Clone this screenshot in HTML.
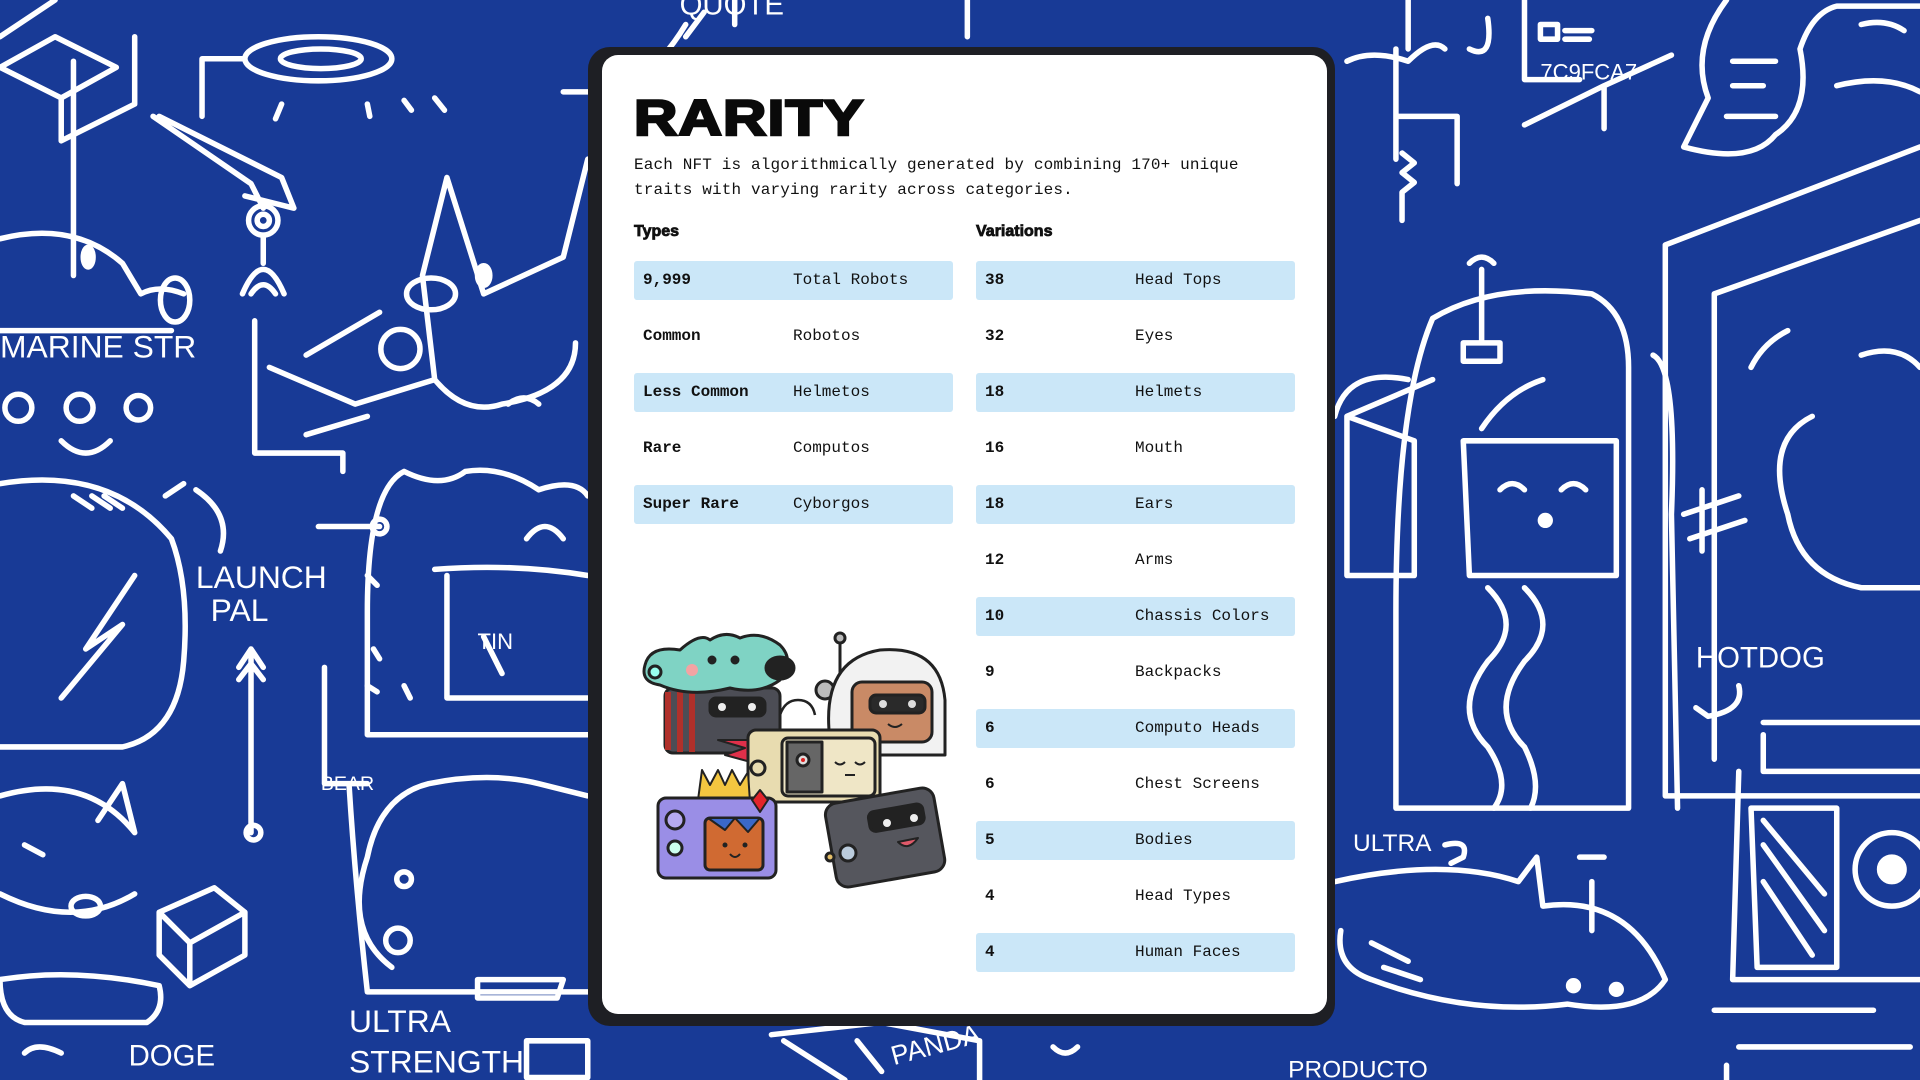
<!DOCTYPE html>
<html><head><meta charset="utf-8"><style>
*{margin:0;padding:0;box-sizing:border-box}
body{width:1920px;height:1080px;overflow:hidden;background:#183a96;position:relative;font-family:"Liberation Mono",monospace}
#bg{position:absolute;left:0;top:0;width:1920px;height:1080px}
.shadow{position:absolute;left:588px;top:47px;width:747px;height:979px;background:#1e1f24;border-radius:22px}
.card{position:absolute;left:602px;top:55px;width:725px;height:959px;background:#fff;border-radius:16px}
h1{position:absolute;left:32px;top:34px;font-family:"Liberation Sans",sans-serif;font-weight:900;font-size:50px;letter-spacing:1px;transform:scaleX(1.2);transform-origin:left;color:#0a0a0a;-webkit-text-stroke:2.5px #0a0a0a}
.desc{position:absolute;left:32px;top:98px;font-size:16px;line-height:24.5px;color:#111;letter-spacing:.15px}
.hd{position:absolute;top:168px;font-family:"Liberation Sans",sans-serif;font-weight:900;font-size:16px;color:#111;-webkit-text-stroke:.8px #111}
.row{position:absolute;height:39px;width:319px;border-radius:3px;font-size:16px;color:#111}
.row.b{background:#cbe7f8}
.row span{position:absolute;top:10px}
.row .a{left:9px;font-weight:bold}
.row .v{left:159px}
</style></head><body>
<svg id="bg" viewBox="0 0 1568 882" preserveAspectRatio="none" fill="none" stroke="#fff" stroke-width="4.5" stroke-linecap="round" stroke-linejoin="round">
<path d="M0 30 L45 0 M0 55 L45 30 L95 55 L50 80 Z M50 80 V115 L110 85 V30"/>
<ellipse cx="260" cy="48" rx="60" ry="18"/><ellipse cx="262" cy="48" rx="33" ry="8"/>
<path d="M198 48 H165 V95 M460 75 H490 Q530 70 560 20 M230 85l-5 12 M300 85l2 10 M330 82l6 8 M355 80l8 10"/>
<path d="M125 95 L205 150 L215 170 M130 95 L230 145 L240 170 L200 160"/>
<circle cx="215" cy="180" r="12"/><circle cx="215" cy="180" r="5"/>
<path d="M215 192 V215 M198 240 Q215 200 232 240 M205 240 Q215 225 225 240"/>
<path d="M208 262 V370 H280 V385"/>
<path d="M0 195 Q60 180 100 215 L115 240 Q130 232 150 240 M0 270 H140 M60 50 V225"/>
<ellipse cx="143" cy="245" rx="12" ry="18"/><ellipse cx="72" cy="210" rx="4" ry="8" fill="#fff"/>
<text x="0" y="292" font-family="Liberation Sans" font-size="26" fill="#fff" stroke="none">MARINE STR</text>
<circle cx="15" cy="333" r="11"/><circle cx="65" cy="333" r="11"/><circle cx="113" cy="333" r="10"/>
<path d="M50 360 Q70 380 90 360"/>
<path d="M365 145 L345 225 L355 310 Q380 340 410 330 Q470 320 470 280 M365 145 L395 240 L460 210 L480 130 M355 310 L290 330 L220 300 M300 340 L250 355 M310 255 L250 290"/>
<ellipse cx="352" cy="240" rx="20" ry="13"/><ellipse cx="327" cy="285" rx="16" ry="16"/>
<ellipse cx="395" cy="225" rx="5" ry="8" fill="#fff"/><path d="M415 330 Q428 320 440 330"/>
<path d="M0 395 Q90 380 140 440 Q155 480 150 540 Q145 600 100 610 H0 M110 470 L70 530 L100 510 L50 570 M60 405l15 10 M75 405l15 10 M85 405l15 10"/>
<path d="M150 395 L135 405 M160 400 Q190 420 180 450"/>
<text x="160" y="480" font-family="Liberation Sans" font-size="26" fill="#fff" stroke="none">LAUNCH</text>
<text x="172" y="507" font-family="Liberation Sans" font-size="26" fill="#fff" stroke="none">PAL</text>
<path d="M205 530 V680 M195 545 L205 530 L215 545 M195 555 L205 542 L215 555"/>
<circle cx="207" cy="680" r="6"/>
<path d="M265 545 V640 H300 M285 640 Q290 720 300 810 H480"/>
<path d="M300 500 Q300 400 330 385 Q360 400 380 385 Q410 380 440 400 Q470 390 480 405 M300 500 V600 H480 M355 465 Q420 460 480 470 M365 470 V570 H480"/>
<circle cx="310" cy="430" r="6"/><path d="M260 430 H310 M300 470l8 8 M305 530l5 8 M300 560l8 5 M330 560l5 10 M395 520l15 30 M430 440 Q445 420 460 440"/>
<text x="390" y="530" font-family="Liberation Sans" font-size="18" fill="#fff" stroke="none">TIN</text>
<path d="M0 650 Q70 630 110 680 L100 640 L80 670 M0 730 Q60 760 110 730 M130 745 L175 725 L200 745 L155 770 Z M155 770 V805 L200 780 V745 M130 745 V780 L155 805"/>
<ellipse cx="70" cy="740" rx="12" ry="8"/><path d="M20 690l15 8"/>
<path d="M0 800 Q60 790 130 805 Q135 825 120 835 H20 Q0 830 0 800"/>
<path d="M20 860 Q30 850 50 860"/>
<text x="105" y="870" font-family="Liberation Sans" font-size="24" fill="#fff" stroke="none">DOGE</text>
<text x="285" y="843" font-family="Liberation Sans" font-size="26" fill="#fff" stroke="none">ULTRA</text>
<text x="285" y="876" font-family="Liberation Sans" font-size="26" fill="#fff" stroke="none">STRENGTH</text>
<text x="262" y="645" font-family="Liberation Sans" font-size="16" fill="#fff" stroke="none">BEAR</text>
<path d="M300 700 Q310 650 350 640 Q400 630 440 640 L480 650 M300 700 Q280 760 320 790 M390 800 H460 L455 815 H390 Z M430 850 H480 V880 H430 Z"/>
<circle cx="325" cy="768" r="10"/><circle cx="330" cy="718" r="6"/>
<path d="M560 30 L575 10 M600 0 V20 M790 0 V30 M630 845 L720 835 L800 850 V882 M640 850 L690 882 M700 850 L720 875"/>
<text x="730" y="870" font-family="Liberation Sans" font-size="22" fill="#fff" stroke="none" transform="rotate(-15 730 870)">PANDA</text>
<text x="555" y="12" font-family="Liberation Sans" font-size="24" fill="#fff" stroke="none">QUOTE</text>
<path d="M860 855 Q870 865 880 855"/>
<path d="M1100 50 Q1120 40 1150 50 Q1170 30 1180 40 M1200 40 Q1220 50 1215 15 M1150 0 V40"/>
<path d="M1140 40 V95 H1190 V150 M1140 95 V130 M1145 125l10 8 -10 8 10 8 -10 8 V180"/>
<path d="M1245 0 V65 L1290 65 M1245 102 L1310 70 L1365 45 M1310 70 V105"/>
<rect x="1258" y="20" width="14" height="12"/><path d="M1278 25 H1300 M1278 32 H1298"/>
<text x="1258" y="65" font-family="Liberation Sans" font-size="18" fill="#fff" stroke="none">7C9FCA7</text>
<path d="M1410 0 Q1380 40 1395 80 L1375 120 Q1430 135 1450 110 Q1480 90 1470 40 Q1480 10 1500 5 H1568 M1415 70 H1440 M1410 95 H1450 M1415 50 H1450 M1500 70 Q1540 60 1568 75 M1520 20 Q1540 15 1555 25"/>
<path d="M1360 200 V650 H1568 M1360 200 L1568 120 M1400 240 L1568 180 M1400 240 V620 M1480 340 Q1440 360 1460 420 Q1470 470 1520 480 H1568 M1520 290 Q1550 280 1568 300 M1430 300 Q1440 280 1460 270"/>
<path d="M1100 340 L1170 310 M1100 340 V470 H1155 M1100 340 L1155 360 V470 M1150 310 Q1100 300 1090 340"/>
<path d="M1170 260 Q1220 230 1300 240 Q1330 255 1330 300 V660 H1140 V500 Q1140 330 1170 260"/>
<path d="M1210 220 V280 M1195 280 H1225 V295 H1195 Z M1200 215 Q1210 205 1220 215"/>
<path d="M1195 360 H1320 V470 H1200 Z M1225 400 Q1235 390 1245 400 M1275 400 Q1285 390 1295 400 M1210 350 Q1230 320 1260 310"/>
<circle cx="1262" cy="425" r="4" fill="#fff"/>
<path d="M1215 480 Q1245 510 1215 540 Q1185 580 1215 610 Q1235 640 1220 660 M1245 480 Q1275 510 1245 540 Q1215 580 1245 610 Q1260 640 1250 660"/>
<path d="M1350 290 Q1370 300 1365 420 L1370 660 M1375 420 L1420 405 M1380 440 L1425 425 M1390 400 V450"/>
<text x="1385" y="545" font-family="Liberation Sans" font-size="24" fill="#fff" stroke="none">HOTDOG</text>
<path d="M1420 560 Q1425 580 1395 585 L1385 578"/>
<path d="M1440 590 H1568 M1440 600 V630 H1568 M1420 630 L1415 800 H1568 M1430 660 H1500 V790 H1435 Z M1440 670 L1490 730 M1440 690 L1490 760 M1440 720 L1480 780"/>
<circle cx="1545" cy="710" r="30"/><circle cx="1545" cy="710" r="10" fill="#fff"/>
<path d="M1400 825 H1530 M1420 855 H1560 M1410 870 V882"/>
<text x="1105" y="695" font-family="Liberation Sans" font-size="20" fill="#fff" stroke="none">ULTRA</text>
<path d="M1180 690 Q1200 685 1195 700 L1185 705"/>
<path d="M1090 720 Q1180 700 1240 720 L1255 700 L1260 740 Q1330 730 1360 800 Q1340 830 1280 820 Q1200 830 1120 800 Q1090 790 1095 760 M1300 720 V760 M1290 700 H1310"/>
<circle cx="1285" cy="805" r="4" fill="#fff"/><circle cx="1320" cy="808" r="4" fill="#fff"/>
<path d="M1120 770 L1150 785 M1130 790 L1160 800"/>
<text x="1052" y="880" font-family="Liberation Sans" font-size="20" fill="#fff" stroke="none">PRODUCTO</text>
</svg>
<div class="shadow"></div>
<div class="card">
<h1>RARITY</h1>
<div class="desc">Each NFT is algorithmically generated by combining 170+ unique<br>traits with varying rarity across categories.</div>
<div class="hd" style="left:32px">Types</div>
<div class="hd" style="left:374px">Variations</div>

<div class="row b" style="left:32px;top:206px"><span class="a">9,999</span><span class="v">Total Robots</span></div>
<div class="row" style="left:32px;top:262px"><span class="a">Common</span><span class="v">Robotos</span></div>
<div class="row b" style="left:32px;top:318px"><span class="a">Less Common</span><span class="v">Helmetos</span></div>
<div class="row" style="left:32px;top:374px"><span class="a">Rare</span><span class="v">Computos</span></div>
<div class="row b" style="left:32px;top:430px"><span class="a">Super Rare</span><span class="v">Cyborgos</span></div>

<div class="row b" style="left:374px;top:206px"><span class="a">38</span><span class="v">Head Tops</span></div>
<div class="row" style="left:374px;top:262px"><span class="a">32</span><span class="v">Eyes</span></div>
<div class="row b" style="left:374px;top:318px"><span class="a">18</span><span class="v">Helmets</span></div>
<div class="row" style="left:374px;top:374px"><span class="a">16</span><span class="v">Mouth</span></div>
<div class="row b" style="left:374px;top:430px"><span class="a">18</span><span class="v">Ears</span></div>
<div class="row" style="left:374px;top:486px"><span class="a">12</span><span class="v">Arms</span></div>
<div class="row b" style="left:374px;top:542px"><span class="a">10</span><span class="v">Chassis Colors</span></div>
<div class="row" style="left:374px;top:598px"><span class="a">9</span><span class="v">Backpacks</span></div>
<div class="row b" style="left:374px;top:654px"><span class="a">6</span><span class="v">Computo Heads</span></div>
<div class="row" style="left:374px;top:710px"><span class="a">6</span><span class="v">Chest Screens</span></div>
<div class="row b" style="left:374px;top:766px"><span class="a">5</span><span class="v">Bodies</span></div>
<div class="row" style="left:374px;top:822px"><span class="a">4</span><span class="v">Head Types</span></div>
<div class="row b" style="left:374px;top:878px"><span class="a">4</span><span class="v">Human Faces</span></div>

<svg style="position:absolute;left:28px;top:565px" width="330" height="280" viewBox="0 0 330 280" stroke="#222" stroke-width="3" stroke-linejoin="round">
<circle cx="195" cy="70" r="9" fill="#bbb"/><path d="M210 20 V75" fill="none"/><circle cx="210" cy="18" r="5" fill="#bbb"/>
<path d="M200 120 Q190 40 250 30 Q310 25 315 80 V135 H205 Z" fill="#f2f2f2"/>
<rect x="222" y="62" width="80" height="60" rx="10" fill="#c98a66"/>
<rect x="240" y="75" width="55" height="18" rx="6" fill="#2a2a2a"/>
<circle cx="253" cy="84" r="4" fill="#ddd" stroke="none"/><circle cx="282" cy="84" r="4" fill="#ddd" stroke="none"/>
<path d="M258 104 Q265 110 272 104" fill="none" stroke-width="2"/>
<rect x="35" y="68" width="115" height="65" rx="8" fill="#4c4d55"/>
<path d="M38 72 V130 M50 70 V132 M62 70 V132" stroke="#b0302a" stroke-width="6"/>
<rect x="80" y="78" width="55" height="18" rx="6" fill="#222"/>
<circle cx="92" cy="87" r="4" fill="#eee" stroke="none"/><circle cx="122" cy="87" r="4" fill="#eee" stroke="none"/>
<path d="M15 45 Q20 25 50 30 Q70 12 80 20 Q95 10 110 18 Q130 10 150 25 Q165 40 150 60 Q130 75 100 68 Q60 78 30 65 Q10 62 15 45Z" fill="#7fd3c4"/>
<circle cx="25" cy="52" r="6" fill="#9fe"/><circle cx="62" cy="50" r="6" fill="#f3a3a3" stroke="none"/>
<circle cx="82" cy="40" r="3" fill="#222"/><circle cx="105" cy="40" r="3" fill="#222"/>
<ellipse cx="150" cy="48" rx="14" ry="11" fill="#222"/>
<path d="M88 120 L140 120 L120 135 L150 150 L95 135 L115 128 Z" fill="#e0304a" stroke-width="2"/>
<path d="M150 95 Q155 80 168 80 Q182 80 185 95" fill="none" stroke-width="2.5"/>
<rect x="118" y="110" width="132" height="72" rx="8" fill="#e8dcb0"/>
<rect x="152" y="118" width="93" height="58" rx="6" fill="#efe6c6"/>
<rect x="157" y="122" width="35" height="50" fill="#666"/>
<circle cx="173" cy="140" r="6" fill="#ddd"/><circle cx="173" cy="140" r="2" fill="#d22" stroke="none"/>
<path d="M205 142 Q210 147 215 142 M225 142 Q230 147 235 142 M215 155 H225" fill="none" stroke-width="2"/>
<circle cx="128" cy="148" r="7" fill="#e8dcb0"/>
<path d="M68 180 L72 150 L80 165 L88 150 L95 165 L102 150 L110 165 L118 152 L120 182 Z" fill="#f3c640" stroke-width="2"/>
<rect x="28" y="178" width="118" height="80" rx="8" fill="#9a8ee6"/>
<circle cx="45" cy="200" r="9" fill="#b6aaf0"/><circle cx="45" cy="228" r="7" fill="#cfe"/>
<rect x="75" y="198" width="58" height="52" rx="5" fill="#d06a32"/>
<path d="M78 198 L95 210 L105 198 L118 212 L130 198Z" fill="#3a68c9" stroke-width="2"/>
<circle cx="95" cy="225" r="2.5" fill="#222" stroke="none"/><circle cx="115" cy="225" r="2.5" fill="#222" stroke="none"/>
<path d="M100 234 Q105 240 110 234" fill="none" stroke-width="2"/>
<path d="M130 170 L138 180 L130 192 L122 180 Z" fill="#e3242b" stroke-width="2"/>
<rect x="200" y="175" width="110" height="85" rx="12" fill="#55565d" transform="rotate(-10 255 217)"/>
<rect x="242" y="190" width="55" height="20" rx="6" fill="#222" transform="rotate(-10 255 217)"/>
<circle cx="257" cy="203" r="4" fill="#eee" stroke="none"/><circle cx="284" cy="198" r="4" fill="#eee" stroke="none"/>
<path d="M268 222 Q278 232 288 218 Z" fill="#e05a6a" stroke-width="2"/>
<circle cx="218" cy="233" r="8" fill="#bcd"/><circle cx="200" cy="237" r="4" fill="#e6c06a"/>
</svg>
</div>
</body></html>
